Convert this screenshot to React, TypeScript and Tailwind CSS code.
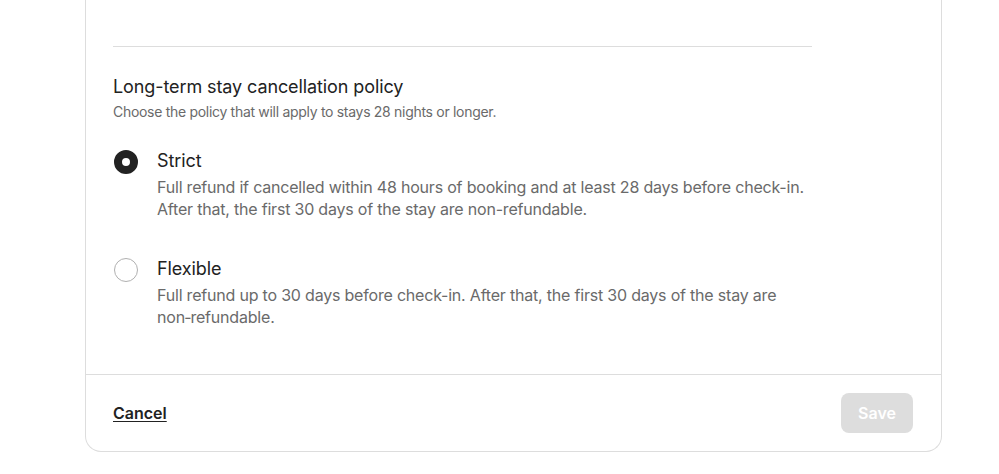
import { useState } from "react";

const OPTIONS = [
  {
    id: "strict",
    title: "Strict",
    body: "Full refund if cancelled within 48 hours of booking and at least 28 days before check-in. After that, the first 30 days of the stay are non-refundable.",
  },
  {
    id: "flexible",
    title: "Flexible",
    body: "Full refund up to 30 days before check-in. After that, the first 30 days of the stay are non\u2011refundable.",
  },
];

function Radio({ checked }: { checked: boolean }) {
  return checked ? (
    <span className="ml-px mt-px h-6 w-6 shrink-0 rounded-full border-[8px] border-[#222222] bg-white" />
  ) : (
    <span className="ml-px mt-px h-6 w-6 shrink-0 rounded-full border border-[#b0b0b0] bg-white" />
  );
}

export default function App() {
  const [policy, setPolicy] = useState("strict");

  return (
    <div className="min-h-[474px] bg-white font-['Inter',sans-serif] text-[#222222]">
      <div className="ml-[85px] w-[857px] rounded-b-2xl border-x border-b border-[#dddddd]">
        <div className="pl-[27px]">
          <div className="w-[699px]">
            <div className="h-[46px]" />
            <hr className="border-t border-[#dddddd]" />

            <h2 className="mt-[28px] text-[18px] leading-6 tracking-[-0.1px]">
              Long-term stay cancellation policy
            </h2>
            <p className="mt-[3px] text-[14px] leading-5 text-[#6a6a6a] tracking-[-0.3px]">
              Choose the policy that will apply to stays 28 nights or longer.
            </p>

            <div className="mt-[27px] flex flex-col gap-[37px]">
              {OPTIONS.map((o) => (
                <label
                  key={o.id}
                  className="flex cursor-pointer gap-[19px]"
                  onClick={() => setPolicy(o.id)}
                >
                  <Radio checked={policy === o.id} />
                  <span className="flex flex-col">
                    <span className="text-[18px] leading-6 tracking-[-0.1px]">{o.title}</span>
                    <span className="mt-[3px] text-[16px] leading-[22px] text-[#6a6a6a] tracking-[-0.2px]">
                      {o.body}
                    </span>
                  </span>
                </label>
              ))}
            </div>
          </div>
        </div>

        <div className="mt-[46px] flex items-center justify-between border-t border-[#dddddd] py-[18px] pl-[27px] pr-[28px]">
          <button className="text-[16px] font-semibold leading-5 underline underline-offset-2">
            Cancel
          </button>
          <button className="h-10 w-[72px] rounded-lg bg-[#dddddd] text-[16px] font-semibold text-white">
            Save
          </button>
        </div>
      </div>
    </div>
  );
}
